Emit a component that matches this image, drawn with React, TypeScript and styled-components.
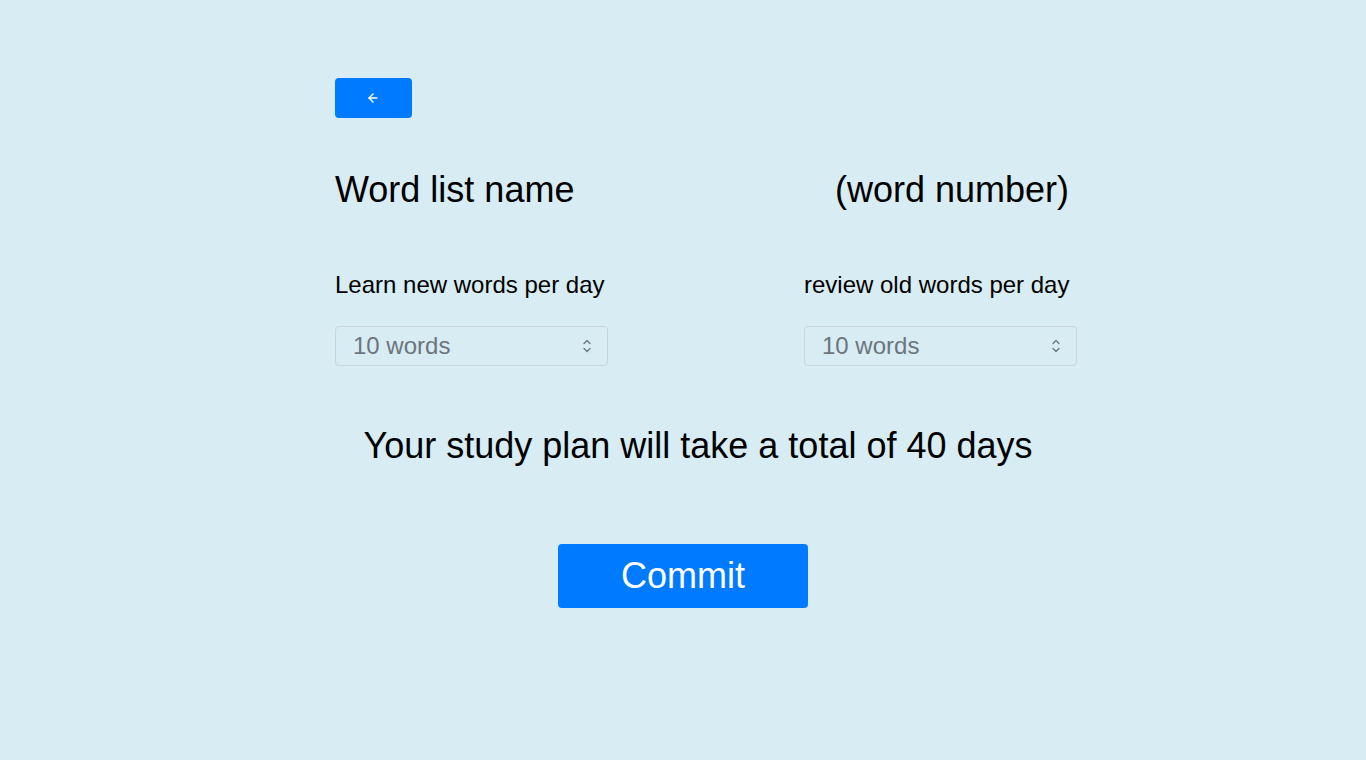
import React from "react";
import styled, { createGlobalStyle } from "styled-components";

const Global = createGlobalStyle`
  html, body { margin: 0; padding: 0; background: #d8ecf3; }
  body { font-family: "Liberation Sans", Arial, sans-serif; color: #000; }
`;

const Page = styled.div`
  min-height: 760px;
  padding-top: 78px;
  box-sizing: border-box;
  display: flex;
  flex-direction: column;
`;

const Content = styled.div`
  margin-left: 335px;
  width: 742px;
  display: flex;
  flex-direction: column;
`;

const BackButton = styled.button`
  width: 77px;
  height: 40px;
  border: none;
  border-radius: 4px;
  background: #007bff;
  display: flex;
  align-items: center;
  justify-content: center;
  padding: 0 1px 0 0;
  cursor: pointer;
`;

const TitleRow = styled.div`
  margin-top: 50px;
  display: flex;
  justify-content: space-between;
  padding-right: 8px;
  font-size: 36px;
  line-height: 43px;
`;

const Columns = styled.div`
  margin-top: 59px;
  display: grid;
  grid-template-columns: 273px 273px;
  column-gap: 196px;
`;

const Field = styled.div`
  display: flex;
  flex-direction: column;
`;

const Label = styled.label`
  font-size: 24px;
  line-height: 29px;
  height: 29px;
  white-space: nowrap;
`;

const SelectWrap = styled.div`
  position: relative;
  margin-top: 27px;
  width: 273px;
  height: 40px;
`;

const Select = styled.select`
  appearance: none;
  -webkit-appearance: none;
  width: 100%;
  height: 100%;
  box-sizing: border-box;
  border: 1px solid #c9d5dc;
  border-radius: 4px;
  background: #d8ecf3;
  color: #6c757d;
  font-family: "Liberation Sans", Arial, sans-serif;
  font-size: 24px;
  padding: 0 0 1px 17px;
  outline: none;
`;

const Chevron = styled.svg`
  position: absolute;
  right: 17px;
  top: 13px;
  pointer-events: none;
`;

const Plan = styled.div`
  margin-top: 58px;
  font-size: 36px;
  line-height: 43px;
  text-align: center;
  padding-right: 16px;
`;

const CommitButton = styled.button`
  margin: 77px auto 0;
  width: 250px;
  height: 64px;
  border: none;
  border-radius: 4px;
  background: #007bff;
  color: #fff;
  font-family: "Liberation Sans", Arial, sans-serif;
  font-size: 36px;
  cursor: pointer;
`;

const options = ["10 words", "20 words", "30 words", "50 words"];

function WordSelect() {
  return (
    <SelectWrap>
      <Select defaultValue="10 words">
        {options.map((o) => (
          <option key={o}>{o}</option>
        ))}
      </Select>
      <Chevron width="8" height="14" viewBox="0 0 8 14" fill="none" stroke="#6c757d" strokeWidth="1.3" strokeLinecap="round" strokeLinejoin="round">
        <path d="M1 4.5 L4 1.5 L7 4.5" />
        <path d="M1 9.5 L4 12.5 L7 9.5" />
      </Chevron>
    </SelectWrap>
  );
}

export default function App() {
  return (
    <>
      <Global />
      <Page>
        <Content>
          <BackButton aria-label="back">
            <svg width="12" height="12" viewBox="0 0 12 12" fill="none" stroke="#fff" strokeWidth="1.4" strokeLinecap="round" strokeLinejoin="round">
              <path d="M10 6 H2" />
              <path d="M6 2 L2 6 L6 10" />
            </svg>
          </BackButton>
          <TitleRow>
            <span>Word list name</span>
            <span>(word number)</span>
          </TitleRow>
          <Columns>
            <Field>
              <Label>Learn new words per day</Label>
              <WordSelect />
            </Field>
            <Field>
              <Label>review old words per day</Label>
              <WordSelect />
            </Field>
          </Columns>
          <Plan>Your study plan will take a total of 40 days</Plan>
        </Content>
        <CommitButton>Commit</CommitButton>
      </Page>
    </>
  );
}
